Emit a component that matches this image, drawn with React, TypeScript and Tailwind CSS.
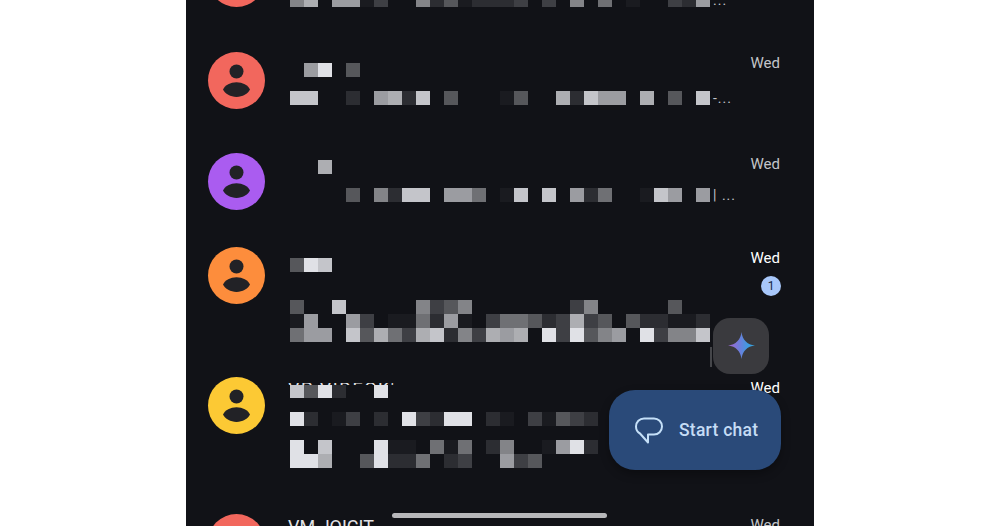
const shades: Record<string, string> = {
  "1": "bg-[#1a1b20]",
  "2": "bg-[#2c2d32]",
  "3": "bg-[#3e3f44]",
  "4": "bg-[#56575b]",
  "5": "bg-[#6f7074]",
  "6": "bg-[#838488]",
  "7": "bg-[#9b9ca1]",
  "8": "bg-[#adaeb2]",
  "9": "bg-[#c4c5ca]",
  a: "bg-[#e0e1e6]",
};

function Line({ cells, tail, className = "h-[14px]" }: { cells: string; tail?: string; className?: string }) {
  return (
    <div className={`flex ${className}`}>
      {cells.split("").map((c, i) => (
        <span key={i} className={`w-[14px] h-full shrink-0 ${shades[c] ?? ""}`} />
      ))}
      {tail ? (
        <span className="ml-[3px] text-[14px] leading-[14px] tracking-[1px] text-[#c4c5ca] whitespace-pre">{tail}</span>
      ) : null}
    </div>
  );
}

function Avatar({ color }: { color: string }) {
  return (
    <div className={`w-[57px] h-[57px] rounded-full shrink-0 flex items-center justify-center ${color}`}>
      <svg width="57" height="57" viewBox="0 0 57 57" fill="#222226">
        <circle cx="28.5" cy="19.5" r="7" />
        <path d="M15 37.5C17 33.3 22.5 30.3 28.5 30.3C34.5 30.3 40 33.3 42 37.5C40 41.7 34.5 44.9 28.5 44.9C22.5 44.9 17 41.7 15 37.5Z" />
      </svg>
    </div>
  );
}

function Row({
  color,
  height,
  time,
  bold,
  badge,
  children,
}: {
  color: string;
  height: string;
  time?: boolean;
  bold?: boolean;
  badge?: boolean;
  children: React.ReactNode;
}) {
  return (
    <div className={`flex pl-[22px] pr-[33px] shrink-0 ${height}`}>
      <Avatar color={color} />
      <div className="ml-[25px] flex-1 min-w-0 flex flex-col">{children}</div>
      {time ? (
        <div className="flex flex-col items-end w-[40px] shrink-0">
          <span className={`mt-[2px] mr-[1px] text-[15px] leading-[18px] ${bold ? "text-white" : "text-[#c4c5c9]"}`}>
            Wed
          </span>
          {badge ? (
            <span className="mt-[9px] w-[20px] h-[20px] rounded-full bg-[#a8c7fa] text-[#15263f] text-[12px] leading-[20px] text-center">
              1
            </span>
          ) : null}
        </div>
      ) : null}
    </div>
  );
}

export default function App() {
  return (
    <div className="h-[526px] w-full bg-white overflow-hidden font-['Roboto',sans-serif]">
      <div className="relative mx-auto w-[628px] h-[526px] bg-[#111217] overflow-hidden">
        <div className="flex flex-col -mt-[50px]">
          <Row color="bg-[#f2675d]" height="h-[102px]">
            <div className="mt-[43px]">
              <Line cells="68.7713..62412223.3.6.5.1..327" tail="..." />
            </div>
          </Row>
          <Row color="bg-[#f2675d]" height="h-[101px]" time>
            <div className="mt-[11px]">
              <Line cells=".7a.4" />
            </div>
            <div className="mt-[14px]">
              <Line cells="99..2.7829.4...14..82977.8.4.9" tail="-..." />
            </div>
          </Row>
          <Row color="bg-[#aa5cf0]" height="h-[94px]" time>
            <div className="mt-[7px]">
              <Line cells="..8" />
            </div>
            <div className="mt-[14px]">
              <Line cells="....4.6299.775.19.9.725..197.7" tail="| ..." />
            </div>
          </Row>
          <Row color="bg-[#fd8d3c]" height="h-[130px]" time bold badge>
            <div className="mt-[11px]">
              <Line cells="4a9" />
            </div>
            <div className="mt-[28px]">
              <Line cells="4..9.....6346.......36.....4" />
              <Line cells="17..73.115271.355423834.422112" />
              <Line cells="577.9485389263878.a3a467.a3669" />
            </div>
          </Row>
          <Row color="bg-[#fcc934]" height="h-[137px]" time bold>
            <div className="mt-[6px] h-[2px] overflow-hidden -ml-[2px]">
              <div className="-mt-[4px] text-[18px] leading-[20px] tracking-[1.5px] text-[#e3e3e6] whitespace-nowrap">VP VIDEOK'</div>
            </div>
            <Line cells="94a2..a" className="h-[13px]" />
            <div className="mt-[14px]">
              <Line cells="a2.13.2.a32aa.21.31432" />
            </div>
            <div className="mt-[14px]">
              <Line cells="a.9...a11.515.26..17a2" />
              <Line cells="aa8..4a225.23..734" />
            </div>
          </Row>
          <Row color="bg-[#f2675d]" height="h-[137px]" time>
            <div className="mt-[3px] -ml-[2px] text-[18px] leading-[20px] text-[#e3e3e6] whitespace-nowrap">VM JOICIT</div>
          </Row>
        </div>

        <span className="absolute left-[524px] top-[347px] w-[2px] h-[20px] bg-[#45464a]" />

        <div className="absolute left-[527px] top-[318px] w-[56px] h-[56px] rounded-[17px] bg-[#3a3a3e] flex items-center justify-center">
          <svg width="27" height="27" viewBox="0 0 26 26" className="-mt-[1px]">
            <defs>
              <linearGradient id="gem" x1="0" y1="0.5" x2="1" y2="0.5">
                <stop offset="0.1" stopColor="#9a6ad4" />
                <stop offset="0.45" stopColor="#6a7fdc" />
                <stop offset="0.75" stopColor="#3d9ce0" />
                <stop offset="1" stopColor="#38a5e0" />
              </linearGradient>
            </defs>
            <path
              fill="url(#gem)"
              d="M13 0C13.8 7.5 18.5 12.2 26 13C18.5 13.8 13.8 18.5 13 26C12.2 18.5 7.5 13.8 0 13C7.5 12.2 12.2 7.5 13 0Z"
            />
          </svg>
        </div>

        <div className="absolute left-[423px] top-[390px] w-[172px] h-[80px] rounded-[26px] bg-[#2a4a79] shadow-[0_4px_10px_rgba(0,0,0,0.3)] flex items-center pl-[26px]">
          <svg width="28" height="28" viewBox="0 0 28 28" fill="none" stroke="#c5e0f8" strokeWidth="2" strokeLinejoin="round" className="mt-[1px]">
            <path d="M9 1.5H19C23.4 1.5 27 5 27 9.5C27 14 23.4 17.5 19 17.5H13V25.5L5 16.5C2.6 15.2 1 12.5 1 9.5C1 5 4.6 1.5 9 1.5Z" />
          </svg>
          <span className="ml-[16px] text-[17.5px] leading-[24px] text-[#c5dcf5] font-medium tracking-[0.25px] whitespace-nowrap">Start chat</span>
        </div>

        <div className="absolute left-[206px] top-[513px] w-[215px] h-[5px] rounded-full bg-[#b7b7ba]" />
      </div>
    </div>
  );
}
